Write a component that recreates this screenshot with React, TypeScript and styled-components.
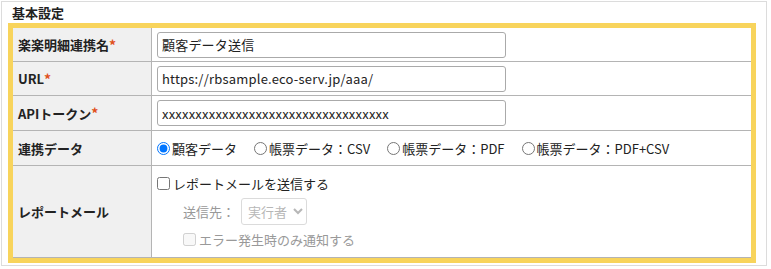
import styled, { createGlobalStyle } from 'styled-components';

const GlobalStyle = createGlobalStyle`
  body {
    margin: 0;
    background: #fff;
    font-family: "Noto Sans CJK JP", "Noto Sans", sans-serif;
    font-size: 13px;
    color: #333;
  }
`;

const Panel = styled.div`
  margin: 1px;
  width: 766px;
  height: 265px;
  box-sizing: border-box;
  border: 1px solid #dcdcdc;
  padding: 0 10px 2px 6px;
`;

const Title = styled.div`
  font-weight: bold;
  font-size: 13px;
  line-height: 21px;
  padding-left: 4px;
  color: #222;
`;

const Frame = styled.div`
  border: 5px solid #f8d45c;
`;

const Row = styled.div<{ $h: number }>`
  display: grid;
  grid-template-columns: 139px 1fr;
  height: ${p => p.$h}px;
  border-bottom: 1px solid #b4b4b4;
  box-sizing: border-box;
`;

const Label = styled.div`
  background: #f0f0f0;
  border-right: 1px solid #b4b4b4;
  display: flex;
  align-items: center;
  padding-left: 5px;
  font-weight: bold;
  color: #222;
`;

const Req = styled.span`
  color: #e0501c;
  font-size: 14px;
`;

const Cell = styled.div`
  display: flex;
  align-items: center;
  padding-left: 5px;
`;

const TextInput = styled.input`
  width: 349px;
  height: 26px;
  box-sizing: border-box;
  border: 1px solid #aaa;
  border-radius: 3px;
  padding: 0 4px;
  font: inherit;
  font-size: 13px;
  letter-spacing: 0.2px;
  color: #222;
`;

const Options = styled.div`
  display: flex;
  gap: 17px;
`;

const Option = styled.label`
  display: flex;
  align-items: center;
  color: #222;
  input {
    margin: 0 2px 0 0;
    width: 13px;
    height: 13px;
  }
`;

const MailCell = styled.div`
  display: flex;
  flex-direction: column;
  justify-content: center;
  gap: 5px;
  padding-left: 5px;
`;

const Check = styled.label<{ $disabled?: boolean }>`
  display: flex;
  align-items: center;
  color: ${p => (p.$disabled ? '#999' : '#222')};
  padding-left: ${p => (p.$disabled ? '26px' : '0')};
  input {
    margin: 0 3px 0 0;
    width: 13px;
    height: 13px;
  }
`;

const DestRow = styled.div`
  display: flex;
  align-items: center;
  padding-left: 26px;
  color: #999;
  gap: 6px;
`;

const Select = styled.select`
  height: 27px;
  font: inherit;
  font-size: 13px;
  color: #999;
  border: 1px solid #ccc;
  border-radius: 3px;
  background: #fff;
  padding: 0 2px;
`;

export default function App() {
  const options = ['顧客データ', '帳票データ：CSV', '帳票データ：PDF', '帳票データ：PDF+CSV'];
  return (
    <>
      <GlobalStyle />
      <Panel>
        <Title>基本設定</Title>
        <Frame>
          <Row $h={34}>
            <Label>楽楽明細連携名<Req>*</Req></Label>
            <Cell><TextInput defaultValue="顧客データ送信" /></Cell>
          </Row>
          <Row $h={34}>
            <Label>URL<Req>*</Req></Label>
            <Cell><TextInput defaultValue="https://rbsample.eco-serv.jp/aaa/" /></Cell>
          </Row>
          <Row $h={35}>
            <Label>APIトークン<Req>*</Req></Label>
            <Cell><TextInput defaultValue="xxxxxxxxxxxxxxxxxxxxxxxxxxxxxxxxxx" /></Cell>
          </Row>
          <Row $h={35}>
            <Label>連携データ</Label>
            <Cell>
              <Options>
                {options.map((o, i) => (
                  <Option key={o}>
                    <input type="radio" name="data" defaultChecked={i === 0} />
                    {o}
                  </Option>
                ))}
              </Options>
            </Cell>
          </Row>
          <Row $h={92}>
            <Label>レポートメール</Label>
            <MailCell>
              <Check><input type="checkbox" />レポートメールを送信する</Check>
              <DestRow>
                送信先：
                <Select disabled defaultValue="実行者">
                  <option>実行者</option>
                </Select>
              </DestRow>
              <Check $disabled><input type="checkbox" disabled />エラー発生時のみ通知する</Check>
            </MailCell>
          </Row>
        </Frame>
      </Panel>
    </>
  );
}
